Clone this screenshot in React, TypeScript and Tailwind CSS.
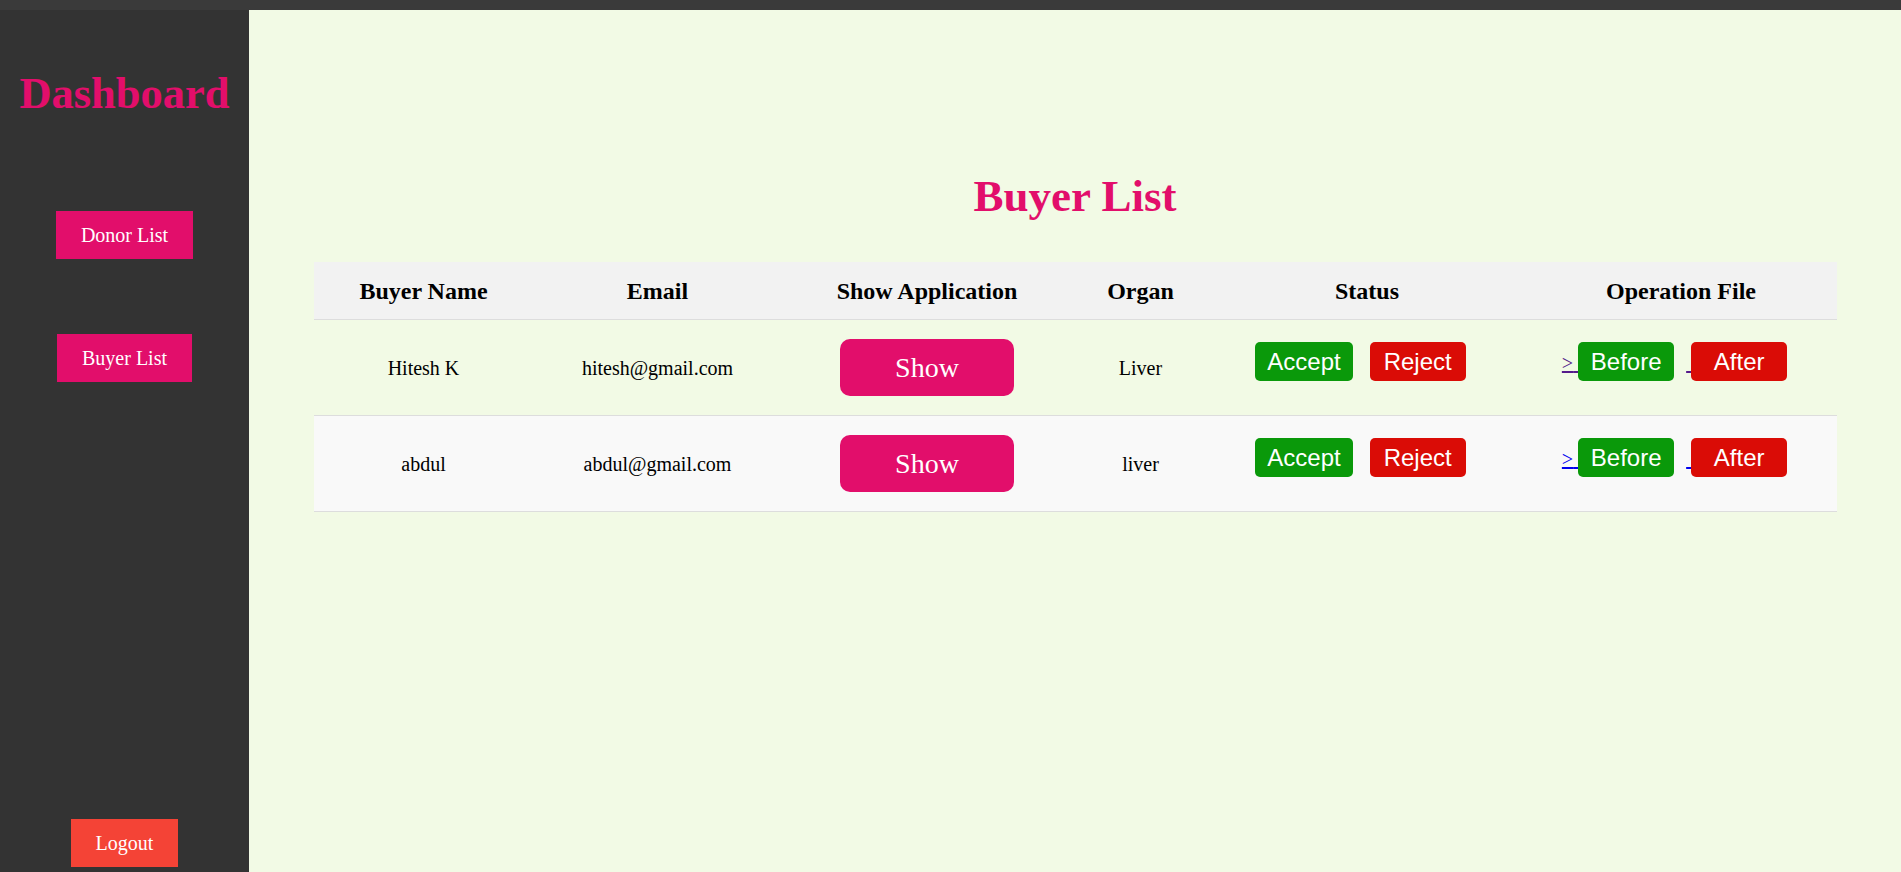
import React from "react";

const serif = { fontFamily: '"Liberation Serif", "Times New Roman", serif' };

const rows = [
  { name: "Hitesh K", email: "hitesh@gmail.com", organ: "Liver", bg: "bg-[#f2fae5]", link: "text-[#551a8b]" },
  { name: "abdul", email: "abdul@gmail.com", organ: "liver", bg: "bg-[#f9f9f9]", link: "text-[#0000ee]" },
];

const grid = "grid grid-cols-[220px_248px_291px_136px_317px_311px]";

function SmallBtn({ color, children }: { color: string; children: React.ReactNode }) {
  return (
    <span
      className={`inline-block min-w-[96px] px-[12px] py-[6px] text-center text-[24px] leading-[27px] text-white rounded-[5px] font-['Liberation_Sans',Arial,sans-serif] no-underline ${color}`}
    >
      {children}
    </span>
  );
}

export default function App() {
  return (
    <div className="w-[1901px] h-[872px] overflow-hidden font-['Liberation_Serif','Times_New_Roman',serif]" style={serif}>
      <div className="h-[10px] bg-[#3a3a3a]" />
      <div className="flex h-[862px]">
        <aside className="w-[249px] bg-[#333333] flex flex-col items-center">
          <h1 className="mt-[58px] text-[44.5px] leading-[50px] font-bold text-[#e20e6b]">Dashboard</h1>
          <button className="mt-[93px] h-[48px] px-[25px] bg-[#e20e6b] text-white text-[20px]">Donor List</button>
          <button className="mt-[75px] h-[48px] px-[25px] bg-[#e20e6b] text-white text-[20px]">Buyer List</button>
          <button className="mt-auto mb-[5px] h-[48px] px-[25px] bg-[#f44336] text-white text-[20px]">Logout</button>
        </aside>
        <main className="flex-1 bg-[#f2fae5] flex flex-col">
          <h2 className="mt-[160px] text-center text-[45px] leading-[52px] font-bold text-[#e20e6b]">Buyer List</h2>
          <div className="mt-[40px] w-[1523px] mx-auto">
            <div className={`${grid} h-[58px] bg-[#f2f2f2] border-b border-[#dddddd] text-[24px] font-bold text-black`}>
              {["Buyer Name", "Email", "Show Application", "Organ", "Status", "Operation File"].map((h) => (
                <div key={h} className="flex items-center justify-center">{h}</div>
              ))}
            </div>
            {rows.map((r) => (
              <div key={r.name} className={`${grid} h-[96px] ${r.bg} border-b border-[#dddddd] text-[20px] text-black`}>
                <div className="flex items-center justify-center">{r.name}</div>
                <div className="flex items-center justify-center">{r.email}</div>
                <div className="flex items-center justify-center">
                  <button className="w-[174px] h-[57px] rounded-[10px] bg-[#e20e6b] text-white text-[28px]">Show</button>
                </div>
                <div className="flex items-center justify-center">{r.organ}</div>
                <div className="flex items-center justify-center pb-[12px] pr-[13px]">
                  <div className="flex gap-[17px]">
                    <SmallBtn color="bg-[#0a990a]">Accept</SmallBtn>
                    <SmallBtn color="bg-[#da0c06]">Reject</SmallBtn>
                  </div>
                </div>
                <div className="flex items-center justify-center pb-[12px] pr-[13px]">
                  <div className="whitespace-nowrap">
                    <a href="#" className={`underline ${r.link}`}>
                      &gt;{"\u00a0"}
                      <SmallBtn color="bg-[#0a990a]">Before</SmallBtn>
                    </a>
                    <a href="#" className={`underline ml-[12px] ${r.link}`}>
                      {"\u00a0"}
                      <SmallBtn color="bg-[#da0c06]">After</SmallBtn>
                    </a>
                  </div>
                </div>
              </div>
            ))}
          </div>
        </main>
      </div>
    </div>
  );
}
